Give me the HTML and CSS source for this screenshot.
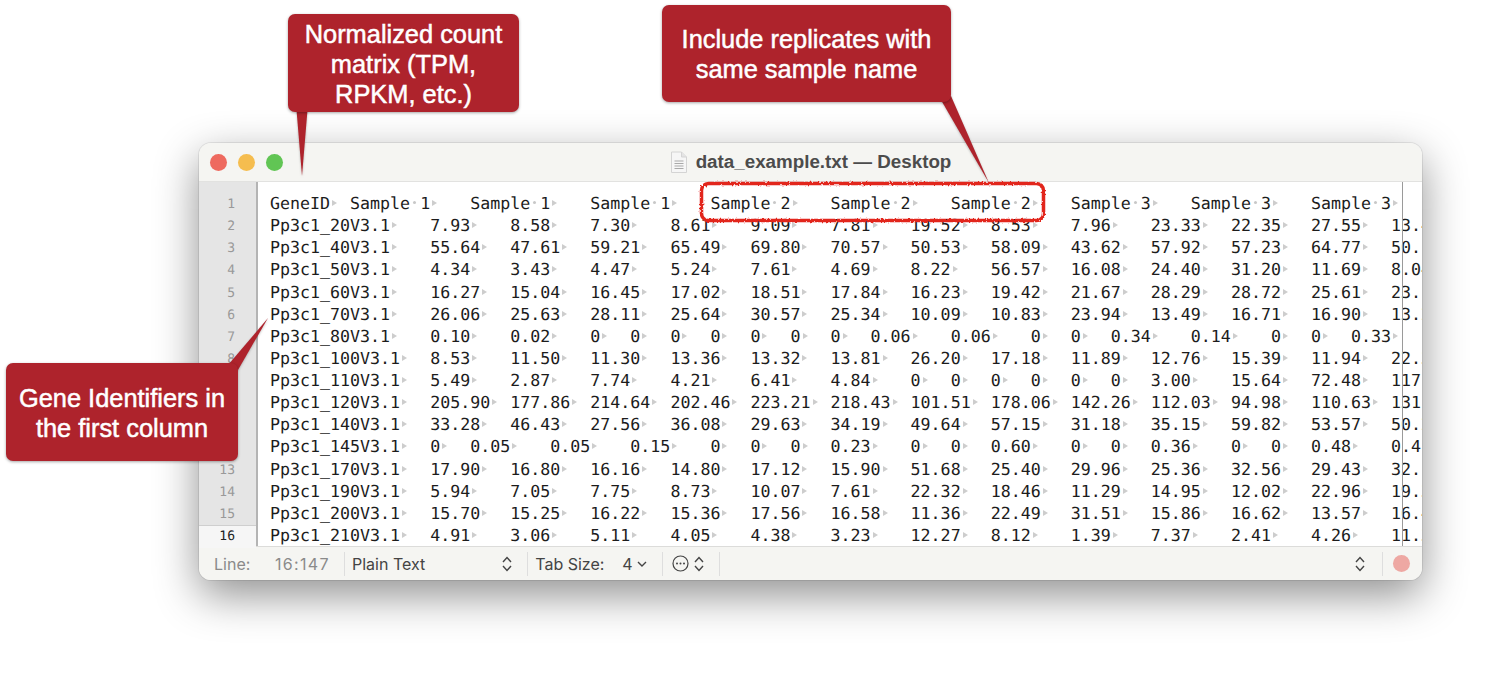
FILE: index.html
```html
<!DOCTYPE html>
<html lang="en">
<head>
<meta charset="utf-8">
<title>data_example.txt</title>
<link rel="stylesheet" href="styles.css">
</head>
<body>
<main class="canvas">
<section class="window">
<header class="titlebar">
<div class="lights"><span class="light red"></span><span class="light yellow"></span><span class="light green"></span></div>
<div class="title">
<svg class="doc" width="18" height="23" viewBox="0 0 18 23"><path d="M1.500 1h10l5 5v15.500H1.500z" fill="#f6f6f6" stroke="#d4d4d4"/><path d="M11.500 1v5h5" fill="#e4e4e4" stroke="#d4d4d4"/><path d="M4.500 10h9M4.500 12.500h9M4.500 15h9M4.500 17.500h9" stroke="#a9a9a9" stroke-width="1"/></svg>
<span>data_example.txt — Desktop</span>
</div>
</header>
<div class="editor">
<div class="gutter"><div>1</div><div>2</div><div>3</div><div>4</div><div>5</div><div>6</div><div>7</div><div>8</div><div>9</div><div>10</div><div>11</div><div>12</div><div>13</div><div>14</div><div>15</div><div class="current">16</div></div>
<pre class="text">GeneID<i class="t"></i>	Sample<i class="s"></i> 1<i class="t"></i>	Sample<i class="s"></i> 1<i class="t"></i>	Sample<i class="s"></i> 1<i class="t"></i>	Sample<i class="s"></i> 2<i class="t"></i>	Sample<i class="s"></i> 2<i class="t"></i>	Sample<i class="s"></i> 2<i class="t"></i>	Sample<i class="s"></i> 3<i class="t"></i>	Sample<i class="s"></i> 3<i class="t"></i>	Sample<i class="s"></i> 3<i class="t"></i>
Pp3c1_20V3.1<i class="t"></i>	7.93<i class="t"></i>	8.58<i class="t"></i>	7.30<i class="t"></i>	8.61<i class="t"></i>	9.09<i class="t"></i>	7.81<i class="t"></i>	19.52<i class="t"></i>	8.53<i class="t"></i>	7.96<i class="t"></i>	23.33<i class="t"></i>	22.35<i class="t"></i>	27.55<i class="t"></i>	13.45
Pp3c1_40V3.1<i class="t"></i>	55.64<i class="t"></i>	47.61<i class="t"></i>	59.21<i class="t"></i>	65.49<i class="t"></i>	69.80<i class="t"></i>	70.57<i class="t"></i>	50.53<i class="t"></i>	58.09<i class="t"></i>	43.62<i class="t"></i>	57.92<i class="t"></i>	57.23<i class="t"></i>	64.77<i class="t"></i>	50.12
Pp3c1_50V3.1<i class="t"></i>	4.34<i class="t"></i>	3.43<i class="t"></i>	4.47<i class="t"></i>	5.24<i class="t"></i>	7.61<i class="t"></i>	4.69<i class="t"></i>	8.22<i class="t"></i>	56.57<i class="t"></i>	16.08<i class="t"></i>	24.40<i class="t"></i>	31.20<i class="t"></i>	11.69<i class="t"></i>	8.04
Pp3c1_60V3.1<i class="t"></i>	16.27<i class="t"></i>	15.04<i class="t"></i>	16.45<i class="t"></i>	17.02<i class="t"></i>	18.51<i class="t"></i>	17.84<i class="t"></i>	16.23<i class="t"></i>	19.42<i class="t"></i>	21.67<i class="t"></i>	28.29<i class="t"></i>	28.72<i class="t"></i>	25.61<i class="t"></i>	23.18
Pp3c1_70V3.1<i class="t"></i>	26.06<i class="t"></i>	25.63<i class="t"></i>	28.11<i class="t"></i>	25.64<i class="t"></i>	30.57<i class="t"></i>	25.34<i class="t"></i>	10.09<i class="t"></i>	10.83<i class="t"></i>	23.94<i class="t"></i>	13.49<i class="t"></i>	16.71<i class="t"></i>	16.90<i class="t"></i>	13.27
Pp3c1_80V3.1<i class="t"></i>	0.10<i class="t"></i>	0.02<i class="t"></i>	0<i class="t"></i>	0<i class="t"></i>	0<i class="t"></i>	0<i class="t"></i>	0<i class="t"></i>	0<i class="t"></i>	0<i class="t"></i>	0.06<i class="t"></i>	0.06<i class="t"></i>	0<i class="t"></i>	0<i class="t"></i>	0.34<i class="t"></i>	0.14<i class="t"></i>	0<i class="t"></i>	0<i class="t"></i>	0.33<i class="t"></i>
Pp3c1_100V3.1<i class="t"></i>	8.53<i class="t"></i>	11.50<i class="t"></i>	11.30<i class="t"></i>	13.36<i class="t"></i>	13.32<i class="t"></i>	13.81<i class="t"></i>	26.20<i class="t"></i>	17.18<i class="t"></i>	11.89<i class="t"></i>	12.76<i class="t"></i>	15.39<i class="t"></i>	11.94<i class="t"></i>	22.31
Pp3c1_110V3.1<i class="t"></i>	5.49<i class="t"></i>	2.87<i class="t"></i>	7.74<i class="t"></i>	4.21<i class="t"></i>	6.41<i class="t"></i>	4.84<i class="t"></i>	0<i class="t"></i>	0<i class="t"></i>	0<i class="t"></i>	0<i class="t"></i>	0<i class="t"></i>	0<i class="t"></i>	3.00<i class="t"></i>	15.64<i class="t"></i>	72.48<i class="t"></i>	117.2
Pp3c1_120V3.1<i class="t"></i>	205.90<i class="t"></i>	177.86<i class="t"></i>	214.64<i class="t"></i>	202.46<i class="t"></i>	223.21<i class="t"></i>	218.43<i class="t"></i>	101.51<i class="t"></i>	178.06<i class="t"></i>	142.26<i class="t"></i>	112.03<i class="t"></i>	94.98<i class="t"></i>	110.63<i class="t"></i>	131.5
Pp3c1_140V3.1<i class="t"></i>	33.28<i class="t"></i>	46.43<i class="t"></i>	27.56<i class="t"></i>	36.08<i class="t"></i>	29.63<i class="t"></i>	34.19<i class="t"></i>	49.64<i class="t"></i>	57.15<i class="t"></i>	31.18<i class="t"></i>	35.15<i class="t"></i>	59.82<i class="t"></i>	53.57<i class="t"></i>	50.26
Pp3c1_145V3.1<i class="t"></i>	0<i class="t"></i>	0.05<i class="t"></i>	0.05<i class="t"></i>	0.15<i class="t"></i>	0<i class="t"></i>	0<i class="t"></i>	0<i class="t"></i>	0.23<i class="t"></i>	0<i class="t"></i>	0<i class="t"></i>	0.60<i class="t"></i>	0<i class="t"></i>	0<i class="t"></i>	0.36<i class="t"></i>	0<i class="t"></i>	0<i class="t"></i>	0.48<i class="t"></i>	0.41
Pp3c1_170V3.1<i class="t"></i>	17.90<i class="t"></i>	16.80<i class="t"></i>	16.16<i class="t"></i>	14.80<i class="t"></i>	17.12<i class="t"></i>	15.90<i class="t"></i>	51.68<i class="t"></i>	25.40<i class="t"></i>	29.96<i class="t"></i>	25.36<i class="t"></i>	32.56<i class="t"></i>	29.43<i class="t"></i>	32.17
Pp3c1_190V3.1<i class="t"></i>	5.94<i class="t"></i>	7.05<i class="t"></i>	7.75<i class="t"></i>	8.73<i class="t"></i>	10.07<i class="t"></i>	7.61<i class="t"></i>	22.32<i class="t"></i>	18.46<i class="t"></i>	11.29<i class="t"></i>	14.95<i class="t"></i>	12.02<i class="t"></i>	22.96<i class="t"></i>	19.33
Pp3c1_200V3.1<i class="t"></i>	15.70<i class="t"></i>	15.25<i class="t"></i>	16.22<i class="t"></i>	15.36<i class="t"></i>	17.56<i class="t"></i>	16.58<i class="t"></i>	11.36<i class="t"></i>	22.49<i class="t"></i>	31.51<i class="t"></i>	15.86<i class="t"></i>	16.62<i class="t"></i>	13.57<i class="t"></i>	16.48
Pp3c1_210V3.1<i class="t"></i>	4.91<i class="t"></i>	3.06<i class="t"></i>	5.11<i class="t"></i>	4.05<i class="t"></i>	4.38<i class="t"></i>	3.23<i class="t"></i>	12.27<i class="t"></i>	8.12<i class="t"></i>	1.39<i class="t"></i>	7.37<i class="t"></i>	2.41<i class="t"></i>	4.26<i class="t"></i>	11.36</pre>
<div class="guide"></div>
</div>
<footer class="statusbar">
<span class="muted line-label">Line:</span>
<span class="muted position">16:147</span>
<span class="divider"></span>
<span class="syntax">Plain Text</span>
<svg class="updown" width="10" height="16" viewBox="0 0 10 16"><path d="M1 6l4-4.500L9 6M1 10l4 4.500L9 10" fill="none" stroke="#444" stroke-width="1.400"/></svg>
<span class="divider"></span>
<span class="syntax tab-label">Tab Size:</span>
<span class="syntax tab-value">4</span>
<svg class="chev" width="10" height="6" viewBox="0 0 10 6"><path d="M1 1l4 4 4-4" fill="none" stroke="#444" stroke-width="1.400"/></svg>
<span class="divider"></span>
<svg class="more" width="17" height="17" viewBox="0 0 17 17"><circle cx="8.500" cy="8.500" r="7.500" fill="none" stroke="#444" stroke-width="1.200"/><circle cx="5" cy="8.500" r="1" fill="#444"/><circle cx="8.500" cy="8.500" r="1" fill="#444"/><circle cx="12" cy="8.500" r="1" fill="#444"/></svg>
<svg class="updown" width="10" height="16" viewBox="0 0 10 16"><path d="M1 6l4-4.500L9 6M1 10l4 4.500L9 10" fill="none" stroke="#444" stroke-width="1.400"/></svg>
<span class="divider"></span>
<span class="spacer"></span>
<svg class="updown" width="10" height="16" viewBox="0 0 10 16"><path d="M1 6l4-4.500L9 6M1 10l4 4.500L9 10" fill="none" stroke="#444" stroke-width="1.400"/></svg>
<span class="divider end"></span>
<span class="record"></span>
</footer>
</section>

<svg class="overlay" width="1500" height="683" viewBox="0 0 1500 683">
<defs>
<filter id="rough" x="-5%" y="-20%" width="110%" height="140%"><feTurbulence type="fractalNoise" baseFrequency="0.5" numOctaves="2" seed="4"/><feDisplacementMap in="SourceGraphic" scale="3"/></filter>
</defs>
<path class="tail" d="M296.500 110L302 176 307.500 110z"/>
<path class="tail" d="M941 100L989 183 951 96z"/>
<path class="tail" d="M228 365L268 318 238 370z"/>
<rect class="scribble" x="701.500" y="183.500" width="342" height="37" rx="7" filter="url(#rough)"/>
</svg>

<div class="callout top-left">Normalized count<br>matrix (TPM,<br>RPKM, etc.)</div>
<div class="callout top-right">Include replicates with<br>same sample name</div>
<div class="callout lower-left">Gene Identifiers in<br>the first column</div>
</main>
</body>
</html>
```
FILE: styles.css
```css
html, body { margin: 0; padding: 0; background: #fff; overflow: hidden; }
.canvas { position: relative; width: 1500px; height: 683px; overflow: hidden; }

.window {
  position: absolute; left: 199px; top: 143px; width: 1223px; height: 437px;
  display: flex; flex-direction: column; overflow: hidden;
  border-radius: 12px; background: #f5f5f2;
  box-shadow: 0 0 0 1px rgba(0,0,0,.08), 0 15px 44px rgba(0,0,0,.44);
}
.titlebar {
  flex: 0 0 39px; display: flex; align-items: center; justify-content: center; position: relative;
  background: #f5f5f2; border-bottom: 1px solid #e2e2e0; box-sizing: border-box;
}
.lights { position: absolute; left: 11px; top: 11px; display: flex; gap: 11px; }
.light { width: 17px; height: 17px; border-radius: 50%; }
.red { background: #ee6a5f; }
.yellow { background: #f5bd4f; }
.green { background: #61c554; }
.title {
  display: flex; align-items: center; gap: 8px;
  font: 700 18.800px/1 "Liberation Sans", sans-serif; color: #4c4c4c;
}
.doc { display: block; }

.editor { flex: 1; display: flex; position: relative; min-height: 0; background: #fff; }
.gutter {
  flex: 0 0 57px; padding-top: 12px; background: #e5e5e5; border-right: 2px solid #b4b4b4;
  font: 13px/22.130px "DejaVu Sans Mono", monospace; color: #999; text-align: right;
  text-rendering: geometricPrecision;
}
.gutter div { padding-right: 21px; }
.gutter .current { background: #f6f6f6; color: #222; border-top: 1px solid #cfcfcf; margin-top: -1px; }
.text {
  flex: 1; margin: 0; padding: 11px 0 0 12px; overflow: hidden; min-width: 0;
  font: 16.640px/22.130px "DejaVu Sans Mono", monospace; color: #1c1c1c;
  tab-size: 4; white-space: pre; text-rendering: geometricPrecision;
}
.t, .s { display: inline-block; width: 0; position: relative; height: 0; vertical-align: baseline; }
.t::before {
  content: ""; position: absolute; left: 2px; bottom: 3px;
  border-left: 5px solid #cdcdcd; border-top: 3.500px solid transparent; border-bottom: 3.500px solid transparent;
}
.s::before {
  content: ""; position: absolute; left: 3px; bottom: 5px; width: 3px; height: 3px; border-radius: 50%; background: #c8c8c8;
}
.guide { position: absolute; left: 1203px; top: 0; bottom: 0; width: 1px; background: #9a9a9a; }

.statusbar {
  flex: 0 0 34px; display: flex; align-items: center; box-sizing: border-box;
  border-top: 1px solid #dcdcda; background: #f5f5f2;
  font: 16px/1 "Inter", sans-serif; color: #444;
}
.muted { color: #8a8a8a; }
.line-label { margin-left: 15px; width: 61px; }
.position { width: 69px; letter-spacing: 1.300px; }
.divider { width: 1px; height: 24px; background: #dedede; }
.syntax { margin-left: 7px; }
.updown { margin-left: 77px; display: block; }
.updown + .divider { margin-left: 15px; }
.tab-label { margin-left: 7px; }
.tab-value { margin-left: 18px; }
.chev { margin-left: 4px; display: block; }
.chev + .divider { margin-left: 15px; }
.more { margin-left: 9px; display: block; }
.more + .updown { margin-left: 5px; }
.spacer { flex: 1; }
.spacer + .updown { margin-left: 0; }
.updown + .divider.end { margin-left: 17px; }
.record { width: 17px; height: 17px; border-radius: 50%; background: #eea8a3; margin: 0 12px 0 10px; }

.overlay { position: absolute; left: 0; top: 0; }
.tail { fill: #ae232c; filter: drop-shadow(0 1px 1px rgba(0,0,0,.25)); }
.scribble { fill: none; stroke: #e2261c; stroke-width: 3.500; }

.callout {
  position: absolute; box-sizing: border-box; display: flex; align-items: center; justify-content: center;
  padding-top: 2px; text-align: center; border-radius: 7px; background: #ae232c; color: #fff;
  font: 25.400px/30px "Liberation Sans", sans-serif; -webkit-text-stroke: .5px #fff;
  box-shadow: 0 1px 3px rgba(0,0,0,.35);
}
.top-left { left: 288px; top: 14px; width: 231px; height: 98px; }
.top-right { left: 662px; top: 5px; width: 289px; height: 97px; padding-top: 0; }
.lower-left { left: 6px; top: 363px; width: 232px; height: 98px; }
```
